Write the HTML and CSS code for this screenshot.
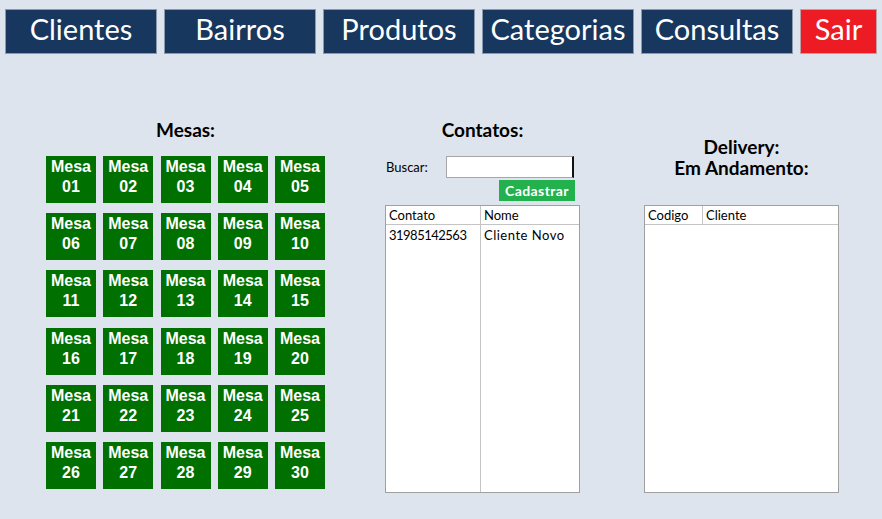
FILE: index.html
```html
<!DOCTYPE html>
<html lang="pt">
<head>
<meta charset="utf-8">
<title>Mesas</title>
<link rel="stylesheet" href="styles.css">
</head>
<body>
<nav class="nav">
  <a class="nav-btn">Clientes</a>
  <a class="nav-btn">Bairros</a>
  <a class="nav-btn">Produtos</a>
  <a class="nav-btn">Categorias</a>
  <a class="nav-btn">Consultas</a>
  <a class="nav-btn nav-exit">Sair</a>
</nav>
<main class="main">
  <section class="col col-mesas">
    <h2 class="heading">Mesas:</h2>
    <div class="mesas">
      <div class="mesa">Mesa<br>01</div>
      <div class="mesa">Mesa<br>02</div>
      <div class="mesa">Mesa<br>03</div>
      <div class="mesa">Mesa<br>04</div>
      <div class="mesa">Mesa<br>05</div>
      <div class="mesa">Mesa<br>06</div>
      <div class="mesa">Mesa<br>07</div>
      <div class="mesa">Mesa<br>08</div>
      <div class="mesa">Mesa<br>09</div>
      <div class="mesa">Mesa<br>10</div>
      <div class="mesa">Mesa<br>11</div>
      <div class="mesa">Mesa<br>12</div>
      <div class="mesa">Mesa<br>13</div>
      <div class="mesa">Mesa<br>14</div>
      <div class="mesa">Mesa<br>15</div>
      <div class="mesa">Mesa<br>16</div>
      <div class="mesa">Mesa<br>17</div>
      <div class="mesa">Mesa<br>18</div>
      <div class="mesa">Mesa<br>19</div>
      <div class="mesa">Mesa<br>20</div>
      <div class="mesa">Mesa<br>21</div>
      <div class="mesa">Mesa<br>22</div>
      <div class="mesa">Mesa<br>23</div>
      <div class="mesa">Mesa<br>24</div>
      <div class="mesa">Mesa<br>25</div>
      <div class="mesa">Mesa<br>26</div>
      <div class="mesa">Mesa<br>27</div>
      <div class="mesa">Mesa<br>28</div>
      <div class="mesa">Mesa<br>29</div>
      <div class="mesa">Mesa<br>30</div>
    </div>
  </section>
  <section class="col col-contatos">
    <h2 class="heading">Contatos:</h2>
    <div class="search-row">
      <label class="search-label">Buscar:</label>
      <div class="search-input"></div>
    </div>
    <div class="btn-row">
      <button class="btn-cadastrar">Cadastrar</button>
    </div>
    <div class="list">
      <div class="list-head">
        <div class="cell c-contato">Contato</div>
        <div class="cell c-nome">Nome</div>
      </div>
      <div class="list-body list-body-split">
        <div class="list-row">
          <div class="cell c-contato cell-num">31985142563</div>
          <div class="cell c-nome">Cliente Novo</div>
        </div>
      </div>
    </div>
  </section>
  <section class="col col-delivery">
    <h2 class="heading heading-delivery">Delivery:<br>Em Andamento:</h2>
    <div class="list">
      <div class="list-head">
        <div class="cell c-codigo">Codigo</div>
        <div class="cell c-cliente">Cliente</div>
      </div>
      <div class="list-body"></div>
    </div>
  </section>
</main>
</body>
</html>
```
FILE: styles.css
```css
* { box-sizing: border-box; }
html, body {
  margin: 0;
  padding: 0;
  background: #dee4ed;
  height: 100%;
}
body {
  font-family: Lato, "Open Sans", sans-serif;
  color: #000;
  overflow: hidden;
}
.nav {
  display: flex;
  gap: 7px;
  padding: 9px 0 0 5px;
}
.nav-btn {
  width: 152px;
  height: 45px;
  background: #17375e;
  border: 1px solid #8a9bb0;
  color: #fff;
  font-size: 29px;
  line-height: 38px;
  text-align: center;
}
.nav-exit {
  width: 77px;
  background: #ed1c24;
  border-color: #c0a0a8;
}
.main {
  display: flex;
  align-items: flex-start;
  padding: 65px 0 0 46px;
}
.heading {
  margin: 0;
  font-size: 19px;
  font-weight: 700;
  line-height: 22px;
  text-align: center;
}
.col-mesas { width: 279px; }
.mesas {
  margin-top: 15px;
  display: grid;
  grid-template-columns: repeat(5, 50px);
  column-gap: 7.25px;
  row-gap: 10.2px;
}
.mesa {
  height: 47px;
  background: #007000;
  color: #fff;
  font-family: "Liberation Sans", Arial, sans-serif;
  font-weight: 700;
  font-size: 16px;
  line-height: 20px;
  text-align: center;
  padding-top: 1px;
}
.col-contatos {
  width: 195px;
  margin-left: 60px;
}
.search-row {
  display: flex;
  align-items: center;
  margin-top: 15px;
  height: 22px;
}
.search-label {
  font-size: 13px;
  width: 61px;
  padding-left: 1px;
}
.search-input {
  width: 128px;
  height: 22px;
  background: #fff;
  border: 1px solid #a6a6a6;
  border-right: 2px solid #111;
}
.btn-row {
  display: flex;
  justify-content: flex-end;
  margin-top: 2px;
  padding-right: 5px;
}
.btn-cadastrar {
  width: 76px;
  height: 21px;
  border: 0;
  padding: 0;
  background: #22b14c;
  color: #fff;
  font-family: Lato, sans-serif;
  font-weight: 700;
  font-size: 14px;
  letter-spacing: 0.4px;
}
.list {
  margin-top: 4px;
  width: 195px;
  height: 288px;
  background: #fff;
  border: 1px solid #a0a0a0;
  display: flex;
  flex-direction: column;
}
.list-head {
  display: flex;
  height: 19px;
  border-bottom: 1px solid #c4c4c4;
}
.list-body {
  flex: 1;
}
.list-row { display: flex; height: 20px; }
.cell {
  font-size: 13px;
  line-height: 18px;
  padding-left: 3px;
  white-space: nowrap;
}
.cell-num { letter-spacing: -0.5px; }
.c-contato { width: 95px; border-right: 1px solid #c4c4c4; }
.c-nome { flex: 1; }
.list-body-split { display: flex; flex-direction: column; }
.list-body-split .list-row { flex: 1; align-items: flex-start; }
.list-body-split .list-row .cell { height: 100%; line-height: 20px; }
.list-body-split .c-nome { letter-spacing: 0.5px; }
.c-codigo { width: 58px; border-right: 1px solid #c4c4c4; }
.c-cliente { flex: 1; }
.col-delivery {
  width: 195px;
  margin-left: 64px;
}
.heading-delivery {
  margin-top: 17px;
  margin-bottom: 27px;
  line-height: 21px;
}
.col-delivery .list { margin-top: 0; }
```
